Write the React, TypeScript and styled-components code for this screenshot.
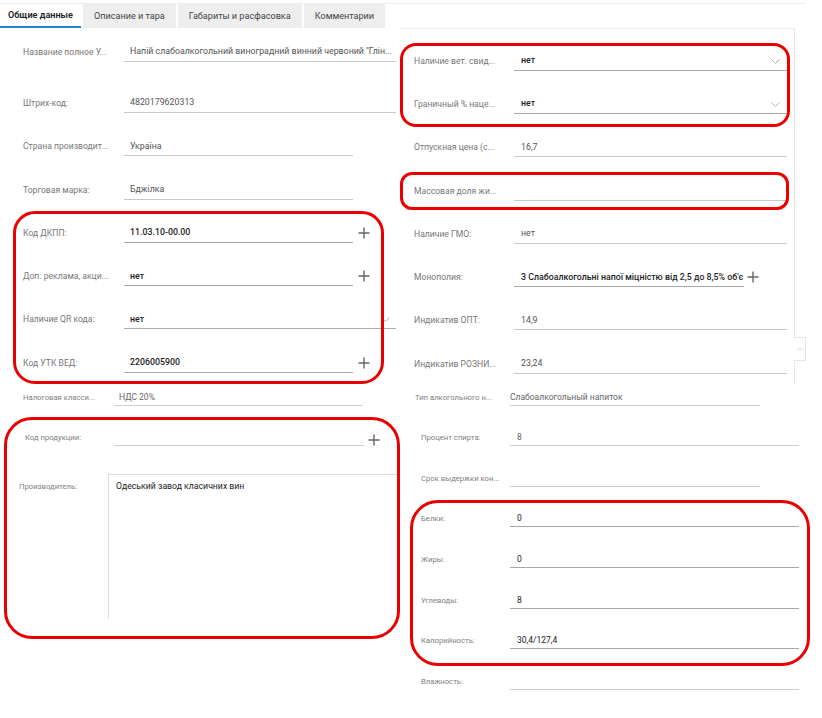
import React from 'react';
import styled, { createGlobalStyle } from 'styled-components';

const GlobalStyle = createGlobalStyle`
  html, body {
    margin: 0;
    padding: 0;
    background: #fff;
  }
  body {
    font-family: Roboto, "Liberation Sans", sans-serif;
  }
`;

const Page = styled.div`
  width: 822px;
  height: 718px;
  padding-top: 3px;
  box-sizing: border-box;
  overflow: hidden;
`;

const TabBar = styled.div`
  display: flex;
  gap: 2px;
  width: 806px;
  height: 24px;
  border-top: 1px solid #ededed;
`;

const Tab = styled.div<{ $active?: boolean }>`
  padding: 0 ${p => (p.$active ? 8 : 11)}px;
  line-height: ${p => (p.$active ? 23 : 25)}px;
  font-size: 9.1px;
  font-weight: ${p => (p.$active ? 600 : 400)};
  color: ${p => (p.$active ? '#222' : '#444')};
  background: ${p => (p.$active ? '#fff' : '#eeeeee')};
  border-bottom: ${p => (p.$active ? '2px solid #1f88cf' : 'none')};
  white-space: nowrap;
`;

const Upper = styled.div`
  display: grid;
  grid-template-columns: 400px 395px;
`;

const LeftColumn = styled.div`
  padding-top: 2px;
`;

const RightPanel = styled.div`
  position: relative;
  padding-top: 10px;
  border-top: 1px solid #ececec;
  border-right: 1px solid #e8e8e8;
`;

const CollapseHandle = styled.div`
  position: absolute;
  right: -12px;
  top: 308px;
  width: 11px;
  height: 22px;
  border: 1px solid #e6e6e6;
  border-left: none;
  background: #fff;
  display: flex;
  align-items: center;
  justify-content: center;
`;

const Row = styled.div<{ $inset: number; $after?: number }>`
  height: 43.3px;
  display: flex;
  align-items: center;
  padding-left: ${p => p.$inset}px;
  margin-bottom: ${p => p.$after ?? 0}px;
  box-sizing: border-box;
`;

const Label = styled.div<{ $w: number }>`
  width: ${p => p.$w}px;
  flex: none;
  font-size: 8.6px;
  color: #777;
  white-space: nowrap;
  overflow: hidden;
`;

const Field = styled.div<{ $w: number; $strong?: boolean; $pad?: number }>`
  position: relative;
  width: ${p => p.$w}px;
  height: 20px;
  flex: none;
  box-sizing: border-box;
  display: flex;
  align-items: center;
  padding-left: ${p => p.$pad ?? 6}px;
  border-bottom: 1px solid ${p => (p.$strong ? '#ababab' : '#c9c9c9')};
  font-size: 8.8px;
  font-weight: ${p => (p.$strong ? 500 : 400)};
  color: ${p => (p.$strong ? '#1e1e1e' : '#555')};
  white-space: nowrap;
  overflow: hidden;
`;

const Chevron = styled.svg<{ $right: number }>`
  position: absolute;
  right: ${p => p.$right}px;
  top: 8px;
`;

const PlusBox = styled.span<{ $gap: number }>`
  display: inline-flex;
  margin-left: ${p => p.$gap}px;
`;

const Highlight = styled.div<{ $t: number; $r: number; $b: number; $l: number; $radius: number }>`
  position: relative;
  &::after {
    content: '';
    position: absolute;
    top: ${p => p.$t}px;
    right: ${p => p.$r}px;
    bottom: ${p => p.$b}px;
    left: ${p => p.$l}px;
    border: 3px solid #ea0000;
    border-radius: ${p => p.$radius}px;
    pointer-events: none;
  }
`;

const Lower = styled.div`
  display: grid;
  grid-template-columns: 400px 422px;
`;

const LowerRow = styled.div<{ $inset: number; $short?: boolean }>`
  height: ${p => (p.$short ? 24.25 : 40.6)}px;
  display: flex;
  align-items: flex-end;
  padding-left: ${p => p.$inset}px;
  padding-bottom: 4px;
  box-sizing: border-box;
`;

const SmallLabel = styled.div<{ $w: number }>`
  width: ${p => p.$w}px;
  flex: none;
  height: 17px;
  line-height: 17px;
  font-size: 7.7px;
  color: #808080;
  white-space: nowrap;
  overflow: hidden;
`;

const SmallField = styled.div<{ $w: number; $pad?: number; $dark?: boolean }>`
  width: ${p => p.$w}px;
  height: 17px;
  flex: none;
  box-sizing: border-box;
  display: flex;
  align-items: center;
  padding-left: ${p => p.$pad ?? 7}px;
  border-bottom: 1px solid ${p => (p.$dark ? '#a8a8a8' : '#cfcfcf')};
  font-size: 8.5px;
  color: ${p => (p.$dark ? '#222' : '#666')};
  white-space: nowrap;
`;

const MemoBlock = styled.div`
  display: flex;
  padding: 24px 0 0 19px;
`;

const MemoLabel = styled.div`
  width: 89px;
  flex: none;
  margin-top: 8px;
  font-size: 7.7px;
  color: #808080;
`;

const Memo = styled.div`
  width: 290px;
  height: 145px;
  box-sizing: border-box;
  padding: 6px 7px;
  border: 1px solid #dcdcdc;
  border-bottom: none;
  font-size: 8.7px;
  color: #222;
`;

const Plus = () => (
  <svg width="12" height="12" viewBox="0 0 12 12">
    <path d="M6 0.5v11M0.5 6h11" stroke="#666" strokeWidth="1.4" fill="none" />
  </svg>
);

const Down = ({ right }: { right: number }) => (
  <Chevron $right={right} width="9" height="5" viewBox="0 0 9 5">
    <path d="M0.5 0.5l4 4 4-4" stroke="#b0b0b0" strokeWidth="1" fill="none" />
  </Chevron>
);

export default function App() {
  return (
    <Page>
      <GlobalStyle />
      <TabBar>
        <Tab $active>Общие данные</Tab>
        <Tab>Описание и тара</Tab>
        <Tab>Габариты и расфасовка</Tab>
        <Tab>Комментарии</Tab>
      </TabBar>

      <Upper>
        <LeftColumn>
          <Row $inset={23} $after={8}>
            <Label $w={101}>Название полное У...</Label>
            <Field $w={272}>Напій слабоалкогольний виноградний винний червоний "Глін...</Field>
          </Row>
          <Row $inset={23}>
            <Label $w={101}>Штрих-код:</Label>
            <Field $w={272}>4820179620313</Field>
          </Row>
          <Row $inset={23}>
            <Label $w={101}>Страна производит...</Label>
            <Field $w={229}>Україна</Field>
          </Row>
          <Row $inset={23}>
            <Label $w={101}>Торговая марка:</Label>
            <Field $w={229}>Бджілка</Field>
          </Row>
          <Highlight $t={0} $r={16} $b={0} $l={13} $radius={22}>
            <Row $inset={23}>
              <Label $w={101}>Код ДКПП:</Label>
              <Field $w={229} $strong>11.03.10-00.00</Field>
              <PlusBox $gap={5}><Plus /></PlusBox>
            </Row>
            <Row $inset={23}>
              <Label $w={101}>Доп. реклама, акци...</Label>
              <Field $w={229} $strong>нет</Field>
              <PlusBox $gap={5}><Plus /></PlusBox>
            </Row>
            <Row $inset={23}>
              <Label $w={101}>Наличие QR кода:</Label>
              <Field $w={272} $strong>нет<Down right={6} /></Field>
            </Row>
            <Row $inset={23}>
              <Label $w={101}>Код УТК ВЕД:</Label>
              <Field $w={229} $strong>2206005900</Field>
              <PlusBox $gap={5}><Plus /></PlusBox>
            </Row>
          </Highlight>
        </LeftColumn>

        <RightPanel>
          <Highlight $t={4} $r={4} $b={-1} $l={0} $radius={16}>
            <Row $inset={14}>
              <Label $w={100}>Наличие вет. свид...</Label>
              <Field $w={273} $pad={7} $strong>нет<Down right={7} /></Field>
            </Row>
            <Row $inset={14}>
              <Label $w={100}>Граничный % наце...</Label>
              <Field $w={273} $pad={7} $strong>нет<Down right={7} /></Field>
            </Row>
          </Highlight>
          <Row $inset={14}>
            <Label $w={100}>Отпускная цена (с...</Label>
            <Field $w={273} $pad={7}>16,7</Field>
          </Row>
          <Highlight $t={3} $r={5} $b={2} $l={0} $radius={12}>
            <Row $inset={14}>
              <Label $w={100}>Массовая доля жи...</Label>
              <Field $w={273} $pad={7} />
            </Row>
          </Highlight>
          <Row $inset={14}>
            <Label $w={100}>Наличие ГМО:</Label>
            <Field $w={273} $pad={7}>нет</Field>
          </Row>
          <Row $inset={14}>
            <Label $w={100}>Монополия:</Label>
            <Field $w={230} $pad={7} $strong>3 Слабоалкогольні напої міцністю від 2,5 до 8,5% об'є</Field>
            <PlusBox $gap={3}><Plus /></PlusBox>
          </Row>
          <Row $inset={14}>
            <Label $w={100}>Индикатив ОПТ:</Label>
            <Field $w={273} $pad={7}>14,9</Field>
          </Row>
          <Row $inset={14}>
            <Label $w={100}>Индикатив РОЗНИ...</Label>
            <Field $w={273} $pad={7}>23,24</Field>
          </Row>
          <CollapseHandle>
            <svg width="6" height="4" viewBox="0 0 6 4">
              <path d="M0.5 3.5l2.5-3 2.5 3" stroke="#c8c8c8" strokeWidth="0.8" fill="none" />
            </svg>
          </CollapseHandle>
        </RightPanel>
      </Upper>

      <Lower>
        <div>
          <LowerRow $inset={23} $short>
            <SmallLabel $w={91}>Налоговая класси...</SmallLabel>
            <SmallField $w={249} $pad={5}>НДС 20%</SmallField>
          </LowerRow>
          <Highlight $t={7} $r={0} $b={-20} $l={4} $radius={28}>
            <LowerRow $inset={25}>
              <SmallLabel $w={89}>Код продукции:</SmallLabel>
              <SmallField $w={250} />
              <PlusBox $gap={4}><Plus /></PlusBox>
            </LowerRow>
            <MemoBlock>
              <MemoLabel>Производитель:</MemoLabel>
              <Memo>Одеський завод класичних вин</Memo>
            </MemoBlock>
          </Highlight>
        </div>

        <div>
          <LowerRow $inset={15} $short>
            <SmallLabel $w={95}>Тип алкогольного н...</SmallLabel>
            <SmallField $w={250} $pad={0}>Слабоалкогольный напиток</SmallField>
          </LowerRow>
          <LowerRow $inset={21}>
            <SmallLabel $w={89}>Процент спирта:</SmallLabel>
            <SmallField $w={289}>8</SmallField>
          </LowerRow>
          <LowerRow $inset={21}>
            <SmallLabel $w={89}>Срок выдержки кон...</SmallLabel>
            <SmallField $w={250} />
          </LowerRow>
          <Highlight $t={9} $r={12} $b={-13} $l={10} $radius={28}>
            <LowerRow $inset={21}>
              <SmallLabel $w={89}>Белки:</SmallLabel>
              <SmallField $w={289} $dark>0</SmallField>
            </LowerRow>
            <LowerRow $inset={21}>
              <SmallLabel $w={89}>Жиры:</SmallLabel>
              <SmallField $w={289} $dark>0</SmallField>
            </LowerRow>
            <LowerRow $inset={21}>
              <SmallLabel $w={89}>Углеводы:</SmallLabel>
              <SmallField $w={289} $dark>8</SmallField>
            </LowerRow>
            <LowerRow $inset={21}>
              <SmallLabel $w={89}>Калорийность:</SmallLabel>
              <SmallField $w={289} $dark>30,4/127,4</SmallField>
            </LowerRow>
          </Highlight>
          <LowerRow $inset={21}>
            <SmallLabel $w={89}>Влажность:</SmallLabel>
            <SmallField $w={289} />
          </LowerRow>
        </div>
      </Lower>
    </Page>
  );
}
